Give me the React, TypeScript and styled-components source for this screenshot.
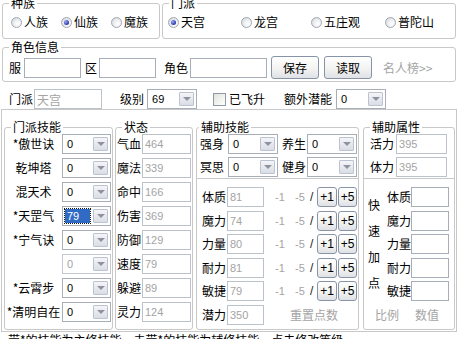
import React from "react";
import styled, { createGlobalStyle, css } from "styled-components";

const CJK = `"Noto Sans CJK SC", "Noto Sans", sans-serif`;
const NUM = `"Liberation Sans", "Noto Sans CJK SC", Arial, sans-serif`;
const LINE = "#c8c8c8";
const FIELD = "#a7aeb8";
const GRAY = "#a4a4a4";

const Global = createGlobalStyle`
  *, *::before, *::after { box-sizing: border-box; }
  html, body { margin: 0; padding: 0; background: #fff; }
  body { font-family: ${CJK}; font-size: 12px; color: #000; }
`;

const Page = styled.div`
  width: 457px;
  height: 339px;
  overflow: hidden;
  background: #fff;
  display: flex;
  flex-direction: column;
  font-family: ${CJK};
  font-size: 12px;
  line-height: 14px;
`;

const Group = styled.fieldset<{ $w: number; $h: number; $ml?: number }>`
  flex: none;
  margin: 0 0 0 ${(p) => p.$ml ?? 0}px;
  padding: 0;
  min-width: 0;
  width: ${(p) => p.$w}px;
  height: ${(p) => p.$h}px;
  border: 1px solid ${LINE};
  border-radius: 3px;
`;

const Legend = styled.legend<{ $ml?: number }>`
  margin-left: ${(p) => p.$ml ?? 6}px;
  padding: 0 2px;
  height: 14px;
  font-family: ${CJK};
  font-size: 12px;
  line-height: 14px;
`;

const TopRow = styled.div`
  flex: none;
  display: flex;
  margin-top: -4px;
  height: 43px;
`;

const RadioRow = styled.div<{ $cols: string; $pl: number }>`
  display: grid;
  grid-template-columns: ${(p) => p.$cols};
  align-items: center;
  height: 14px;
  margin-top: 5px;
  padding-left: ${(p) => p.$pl}px;
`;

const RadioItem = styled.span`
  display: flex;
  align-items: center;
  gap: 2px;
  white-space: nowrap;
`;

const RadioDot = styled.span<{ $on?: boolean }>`
  flex: none;
  width: 11px;
  height: 11px;
  border-radius: 50%;
  border: 1px solid #a2a8b2;
  background: radial-gradient(circle at 65% 65%, #ffffff 0%, #f0f1f3 40%, #ccd0d7 100%);
  display: flex;
  align-items: center;
  justify-content: center;
  ${(p) =>
    p.$on &&
    css`
      &::after {
        content: "";
        width: 5px;
        height: 5px;
        border-radius: 50%;
        background: radial-gradient(circle at 35% 35%, #a0aaf4 0%, #3444b8 60%, #1d2a86 100%);
      }
    `}
`;

const InfoRow = styled.div`
  display: flex;
  align-items: center;
  height: 23px;
  margin-top: 2px;
  padding-left: 6px;
`;

const MetaRow = styled.div`
  flex: none;
  display: flex;
  align-items: center;
  height: 20px;
  margin-top: 7px;
  padding-left: 9px;
`;

const Txt = styled.span<{ $ml?: number; $gray?: boolean; $num?: boolean }>`
  flex: none;
  margin-left: ${(p) => p.$ml ?? 0}px;
  color: ${(p) => (p.$gray ? GRAY : "#000")};
  font-family: ${(p) => (p.$num ? NUM : CJK)};
  font-size: ${(p) => (p.$num ? 11 : 12)}px;
  white-space: nowrap;
`;

const Field = styled.input<{ $w: number; $ml?: number; $dim?: boolean }>`
  flex: none;
  width: ${(p) => p.$w}px;
  height: 20px;
  margin: 0 0 0 ${(p) => p.$ml ?? 0}px;
  padding: 0 2px;
  border: 1px solid ${(p) => (p.$dim ? "#bcc2ca" : FIELD)};
  background: #fff;
  outline: none;
  font-family: ${NUM};
  font-size: 11px;
  color: ${(p) => (p.$dim ? GRAY : "#000")};
`;

const Btn = styled.button<{ $w: number; $h: number; $ml?: number; $num?: boolean }>`
  flex: none;
  width: ${(p) => p.$w}px;
  height: ${(p) => p.$h}px;
  margin: 0 0 0 ${(p) => p.$ml ?? 0}px;
  padding: 0;
  border: 1px solid #8794a8;
  border-radius: 3px;
  background: linear-gradient(#ffffff 0%, #f3f3f1 55%, #dfe1e6 100%);
  font-family: ${(p) => (p.$num ? NUM : CJK)};
  font-size: 12px;
  line-height: 1;
  color: #000;
`;

const Combo = styled.div<{ $w: number; $ml?: number; $off?: boolean }>`
  flex: none;
  display: flex;
  align-items: stretch;
  width: ${(p) => p.$w}px;
  height: 20px;
  margin-left: ${(p) => p.$ml ?? 0}px;
  border: 1px solid ${(p) => (p.$off ? "#c4c9d1" : FIELD)};
  background: #fff;
  padding: 2px;
`;

const ComboText = styled.span<{ $sel?: boolean; $off?: boolean }>`
  flex: 1;
  min-width: 0;
  margin-right: 3px;
  padding-left: 2px;
  font-family: ${NUM};
  font-size: 11px;
  line-height: 14px;
  color: ${(p) => (p.$off ? GRAY : "#000")};
  ${(p) =>
    p.$sel &&
    css`
      background: #316ac5;
      color: #fff;
      outline: 1px dotted #1a1a1a;
    `}
`;

const ComboBtn = styled.span`
  flex: none;
  width: 15px;
  border: 1px solid #bcc3d0;
  border-radius: 1px;
  background: linear-gradient(#f4f5f8, #dadde6);
  display: flex;
  align-items: center;
  justify-content: center;
  &::after {
    content: "";
    border-left: 4px solid transparent;
    border-right: 4px solid transparent;
    border-top: 4px solid #8d93a1;
  }
`;

const Check = styled.span<{ $ml?: number }>`
  flex: none;
  width: 13px;
  height: 13px;
  margin-left: ${(p) => p.$ml ?? 0}px;
  border: 1px solid #8f98a6;
  background: linear-gradient(135deg, #e2e2dd, #ffffff);
`;

const Board = styled.div`
  flex: none;
  display: flex;
  align-items: flex-start;
  margin-left: 1px;
  width: 456px;
  height: 223px;
  border: 1px solid ${LINE};
  padding: 10px 0 0 2px;
`;

const SkillGrid = styled.div`
  display: grid;
  grid-template-columns: 57px 49px;
  grid-auto-rows: 20px;
  row-gap: 4px;
  align-items: center;
`;

const SkillName = styled.span`
  text-align: center;
  line-height: 20px;
  white-space: nowrap;
`;

const StateGrid = styled.div`
  display: grid;
  grid-template-columns: 25px 49px;
  grid-auto-rows: 20px;
  row-gap: 4px;
  align-items: center;
  padding-left: 1px;
`;

const RowName = styled.span`
  line-height: 20px;
  white-space: nowrap;
`;

const PairRows = styled.div`
  display: flex;
  flex-direction: column;
  gap: 3px;
`;

const PairRow = styled.div<{ $pl: number }>`
  display: flex;
  align-items: center;
  height: 20px;
  padding-left: ${(p) => p.$pl}px;
`;

const Divider = styled.div`
  margin-top: 1px;
  border-top: 1px solid ${LINE};
`;

const StatGrid = styled.div`
  display: grid;
  grid-template-columns: 25px 48px 20px 15px 7px 21px 19px;
  grid-auto-rows: 20px;
  row-gap: 3.6px;
  align-items: center;
  margin-top: 8px;
  padding-left: 5px;
`;

const Slash = styled.span`
  font-family: ${NUM};
  font-size: 12px;
  color: #222;
`;

const Reset = styled.span`
  grid-column: 3 / -1;
  padding-left: 15px;
  color: ${GRAY};
  white-space: nowrap;
`;

const Quick = styled.div`
  display: grid;
  grid-template-columns: 18px auto;
`;

const VText = styled.div`
  display: flex;
  flex-direction: column;
  padding: 13px 0 0 4px;
  line-height: 26px;
`;

const QuickGrid = styled.div`
  display: grid;
  grid-template-columns: 24px 38px;
  grid-auto-rows: 20px;
  row-gap: 3.6px;
  align-items: center;
  margin: 8px 0 0 5px;
`;

const QuickFoot = styled.div`
  grid-column: 1 / -1;
  display: flex;
  align-items: center;
  height: 20px;
  margin-top: 3.6px;
  padding-left: 11px;
  color: ${GRAY};
`;

const Note = styled.div`
  flex: none;
  margin-top: 1px;
  padding-left: 8px;
  line-height: 14px;
  white-space: nowrap;
`;

const ComboBox = ({ w, v, ml, sel, off }: { w: number; v: string; ml?: number; sel?: boolean; off?: boolean }) => (
  <Combo $w={w} $ml={ml} $off={off}>
    <ComboText $sel={sel} $off={off}>{v}</ComboText>
    <ComboBtn />
  </Combo>
);

const skills = [
  { n: "*傲世诀", v: "0" },
  { n: "乾坤塔", v: "0" },
  { n: "混天术", v: "0" },
  { n: "*天罡气", v: "79", sel: true },
  { n: "*宁气诀", v: "0" },
  { n: "", v: "0", off: true },
  { n: "*云霄步", v: "0" },
  { n: "*清明自在", v: "0" },
];

const states = [
  ["气血", "464"],
  ["魔法", "339"],
  ["命中", "166"],
  ["伤害", "369"],
  ["防御", "129"],
  ["速度", "79"],
  ["躲避", "89"],
  ["灵力", "124"],
];

const stats = [
  ["体质", "81"],
  ["魔力", "74"],
  ["力量", "80"],
  ["耐力", "81"],
  ["敏捷", "79"],
];

export default function App() {
  return (
    <Page>
      <Global />
      <TopRow>
        <Group $w={158} $h={43} $ml={2}>
          <Legend>种族</Legend>
          <RadioRow $cols="50px 50px 50px" $pl={8}>
            <RadioItem><RadioDot />人族</RadioItem>
            <RadioItem><RadioDot $on />仙族</RadioItem>
            <RadioItem><RadioDot />魔族</RadioItem>
          </RadioRow>
        </Group>
        <Group $w={294} $h={43} $ml={2}>
          <Legend>门派</Legend>
          <RadioRow $cols="73px 70px 74px auto" $pl={5}>
            <RadioItem><RadioDot $on />天宫</RadioItem>
            <RadioItem><RadioDot />龙宫</RadioItem>
            <RadioItem><RadioDot />五庄观</RadioItem>
            <RadioItem><RadioDot />普陀山</RadioItem>
          </RadioRow>
        </Group>
      </TopRow>

      <Group $w={454} $h={42} $ml={2} style={{ marginTop: 1 }}>
        <Legend>角色信息</Legend>
        <InfoRow>
          <Txt>服</Txt>
          <Field $w={57} $ml={3} readOnly value="" />
          <Txt $ml={4}>区</Txt>
          <Field $w={57} $ml={2} readOnly value="" />
          <Txt $ml={8}>角色</Txt>
          <Field $w={77} $ml={2} readOnly value="" />
          <Btn $w={48} $h={23} $ml={4}>保存</Btn>
          <Btn $w={48} $h={23} $ml={5}>读取</Btn>
          <Txt $ml={11} $gray>名人榜&gt;&gt;</Txt>
        </InfoRow>
      </Group>

      <MetaRow>
        <Txt>门派</Txt>
        <Field $w={68} $ml={1} $dim readOnly value="天宫" style={{ fontFamily: CJK, fontSize: 12 }} />
        <Txt $ml={18}>级别</Txt>
        <ComboBox w={50} ml={3} v="69" />
        <Check $ml={16} />
        <Txt $ml={3}>已飞升</Txt>
        <Txt $ml={19}>额外潜能</Txt>
        <ComboBox w={50} ml={4} v="0" />
      </MetaRow>

      <Board>
        <Group $w={109} $h={210}>
          <Legend>门派技能</Legend>
          <SkillGrid>
            {skills.map((s, i) => (
              <React.Fragment key={i}>
                <SkillName>{s.n}</SkillName>
                <ComboBox w={49} v={s.v} sel={s.sel} off={s.off} />
              </React.Fragment>
            ))}
          </SkillGrid>
        </Group>

        <Group $w={78} $h={210} $ml={2}>
          <Legend>状态</Legend>
          <StateGrid>
            {states.map(([n, v]) => (
              <React.Fragment key={n}>
                <RowName>{n}</RowName>
                <Field $w={49} $dim readOnly value={v} />
              </React.Fragment>
            ))}
          </StateGrid>
        </Group>

        <Group $w={163} $h={210} $ml={3}>
          <Legend $ml={2}>辅助技能</Legend>
          <PairRows>
            <PairRow $pl={3}>
              <Txt>强身</Txt>
              <ComboBox w={50} ml={4} v="0" />
              <Txt $ml={4}>养生</Txt>
              <ComboBox w={50} ml={1} v="0" />
            </PairRow>
            <PairRow $pl={3}>
              <Txt>冥思</Txt>
              <ComboBox w={50} ml={4} v="0" />
              <Txt $ml={4}>健身</Txt>
              <ComboBox w={50} ml={1} v="0" />
            </PairRow>
          </PairRows>
          <Divider />
          <StatGrid>
            {stats.map(([n, v]) => (
              <React.Fragment key={n}>
                <RowName>{n}</RowName>
                <Field $w={37} $dim readOnly value={v} />
                <Txt $num $gray>-1</Txt>
                <Txt $num $gray>-5</Txt>
                <Slash>/</Slash>
                <Btn $w={20} $h={20} $num>+1</Btn>
                <Btn $w={19} $h={20} $num>+5</Btn>
              </React.Fragment>
            ))}
            <RowName>潜力</RowName>
            <Field $w={37} $dim readOnly value="350" />
            <Reset>重置点数</Reset>
          </StatGrid>
        </Group>

        <Group $w={92} $h={210} $ml={4}>
          <Legend>辅助属性</Legend>
          <PairRows>
            <PairRow $pl={6}>
              <Txt>活力</Txt>
              <Field $w={51} $ml={2} $dim readOnly value="395" />
            </PairRow>
            <PairRow $pl={6}>
              <Txt>体力</Txt>
              <Field $w={51} $ml={2} $dim readOnly value="395" />
            </PairRow>
          </PairRows>
          <Divider />
          <Quick>
            <VText>
              <span>快</span>
              <span>速</span>
              <span>加</span>
              <span>点</span>
            </VText>
            <QuickGrid>
              {stats.map(([n]) => (
                <React.Fragment key={n}>
                  <RowName>{n}</RowName>
                  <Field $w={38} readOnly value="" />
                </React.Fragment>
              ))}
            </QuickGrid>
            <QuickFoot>
              <span>比例</span>
              <Txt $ml={16} $gray>数值</Txt>
            </QuickFoot>
          </Quick>
        </Group>
      </Board>

      <Note>带*的技能为主修技能，未带*的技能为辅修技能，点击修改等级</Note>
    </Page>
  );
}
